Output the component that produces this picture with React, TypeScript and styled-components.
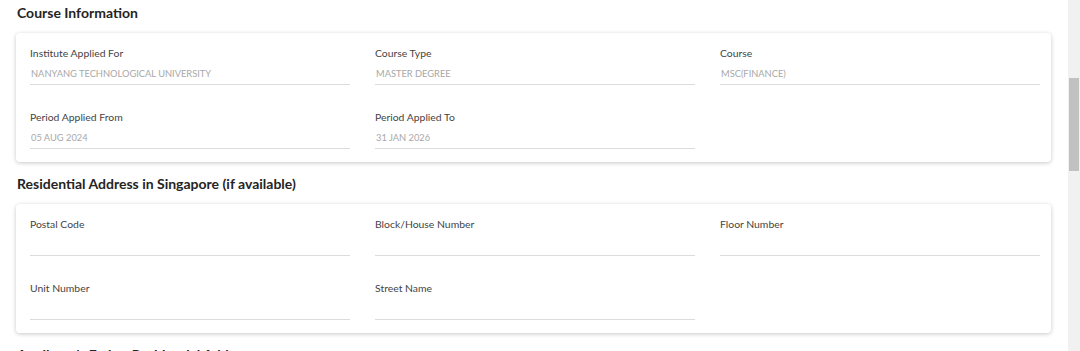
import React from "react";
import styled, { createGlobalStyle } from "styled-components";

type Field = { label: string; value?: string };

const courseFields: Field[] = [
  { label: "Institute Applied For", value: "NANYANG TECHNOLOGICAL UNIVERSITY" },
  { label: "Course Type", value: "MASTER DEGREE" },
  { label: "Course", value: "MSC(FINANCE)" },
  { label: "Period Applied From", value: "05 AUG 2024" },
  { label: "Period Applied To", value: "31 JAN 2026" },
];

const addressFields: Field[] = [
  { label: "Postal Code" },
  { label: "Block/House Number" },
  { label: "Floor Number" },
  { label: "Unit Number" },
  { label: "Street Name" },
];

const GlobalStyle = createGlobalStyle`
  html, body {
    margin: 0;
    padding: 0;
    background: #fff;
    overflow: hidden;
  }
  body {
    font-family: Lato, "Open Sans", Arial, sans-serif;
    color: #333;
  }
`;

const Page = styled.div`
  display: flex;
  width: 1080px;
  height: 351px;
  overflow: hidden;
`;

const Main = styled.main`
  flex: 1;
  padding: 3px 17px 0 16px;
`;

const ScrollTrack = styled.div`
  width: 12px;
  background: #f1f1f1;
  display: flex;
  flex-direction: column;
  align-items: center;
`;

const ScrollThumb = styled.div`
  width: 10px;
  height: 93px;
  margin-top: 78px;
  background: #c1c1c1;
`;

const Section = styled.section`
  margin-bottom: 12px;
`;

const Title = styled.h2`
  margin: 0 0 10px 1px;
  font-size: 14px;
  line-height: 20px;
  font-weight: 700;
  color: #242424;
`;

const Card = styled.div`
  background: #fff;
  border-radius: 4px;
  box-shadow: 0 1px 4px rgba(0, 0, 0, 0.22);
  padding: 13px 11px 13px 14px;
  display: grid;
  grid-template-columns: repeat(3, 320px);
  column-gap: 25px;
  row-gap: 25px;
`;

const FieldBox = styled.div`
  display: flex;
  flex-direction: column;
`;

const Label = styled.label`
  font-size: 10.4px;
  line-height: 14px;
  color: #444;
  margin-bottom: 4px;
`;

const Value = styled.div<{ $empty?: boolean }>`
  height: 20px;
  line-height: 20px;
  font-size: 9.3px;
  color: #a8a8a8;
  border-bottom: 1px solid #dcdcdc;
  padding-left: 1px;
  white-space: nowrap;
`;

const FieldGrid = ({ fields }: { fields: Field[] }) => (
  <Card>
    {fields.map((f) => (
      <FieldBox key={f.label}>
        <Label>{f.label}</Label>
        <Value $empty={!f.value}>{f.value || ""}</Value>
      </FieldBox>
    ))}
  </Card>
);

const App = () => {
  return (
    <>
      <GlobalStyle />
      <Page>
        <Main>
          <Section>
            <Title>Course Information</Title>
            <FieldGrid fields={courseFields} />
          </Section>
          <Section>
            <Title>Residential Address in Singapore (if available)</Title>
            <FieldGrid fields={addressFields} />
          </Section>
          <Section>
            <Title>Applicant's Father Residential Address</Title>
          </Section>
        </Main>
        <ScrollTrack>
          <ScrollThumb />
        </ScrollTrack>
      </Page>
    </>
  );
};

export default App;
